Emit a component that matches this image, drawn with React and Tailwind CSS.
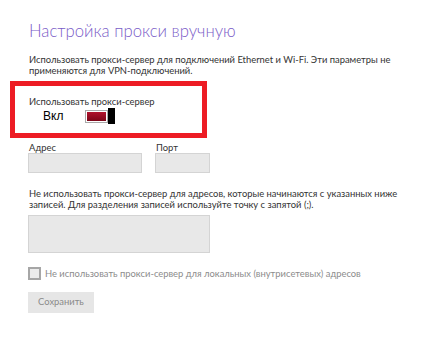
export default function App() {
  return (
    <div className="w-[434px] h-[345px] bg-white font-['Lato','Noto_Sans',sans-serif] text-[#333333] overflow-hidden">
      <div className="pt-[21px] pl-[29px]">
        <h1 className="text-[16.7px] leading-[20px] font-light text-[#7a5cc8]">Настройка прокси вручную</h1>
        <p className="mt-[13px] text-[9.4px] leading-[11px] whitespace-nowrap">
          Использовать прокси-сервер для подключений Ethernet и Wi-Fi. Эти параметры не
          <br />
          применяются для VPN-подключений.
        </p>
      </div>

      <div className="mt-[5px] ml-[10px] w-[197px] h-[57px] border-[5px] border-[#ed1c24] pl-[14px] pt-[10px]">
        <div className="text-[9.4px] leading-[11px]">Использовать прокси-сервер</div>
        <div className="flex items-center mt-[1px]">
          <span className="w-[56px] pl-[14px] text-[12px] leading-[14px] text-black font-['Liberation_Sans',sans-serif]">Вкл</span>
          <div className="flex items-center">
            <div className="w-[23px] h-[13px] border border-[#a9a9a9] p-[1px] bg-white">
              <div className="w-full h-full bg-gradient-to-b from-[#b0122c] to-[#7d0618]" />
            </div>
            <div className="w-[7px] h-[16px] bg-black" />
          </div>
        </div>
      </div>

      <div className="pl-[28px] mt-[5px] flex gap-[13px] text-[9.4px] leading-[10px]">
        <div>
          <div className="pl-[1px]">Адрес</div>
          <div className="w-[114px] h-[20px] bg-[#e8e8e8] border border-[#d4d4d4]" />
        </div>
        <div>
          <div className="pl-[1px]">Порт</div>
          <div className="w-[55px] h-[20px] bg-[#e8e8e8] border border-[#d4d4d4]" />
        </div>
      </div>

      <div className="pl-[28px]">
        <p className="mt-[15px] pl-[1px] text-[9.4px] leading-[11px] whitespace-nowrap">
          Не использовать прокси-сервер для адресов, которые начинаются с указанных ниже
          <br />
          записей. Для разделения записей используйте точку с запятой (;).
        </p>
        <div className="mt-[5px] w-[182px] h-[38px] bg-[#e8e8e8] border border-[#d4d4d4]" />

        <label className="mt-[13px] h-[14px] flex items-center gap-[4px] text-[9.4px] leading-[11px] text-[#8c8c8c]">
          <span className="w-[13px] h-[13px] border-2 border-[#a6a6a6] bg-[#ececec]" />
          Не использовать прокси-сервер для локальных (внутрисетевых) адресов
        </label>

        <button className="mt-[12px] w-[66px] h-[21px] bg-[#e6e6e6] text-[9.4px] text-[#8a8a8a] flex items-center justify-center">
          Сохранить
        </button>
      </div>
    </div>
  );
}
